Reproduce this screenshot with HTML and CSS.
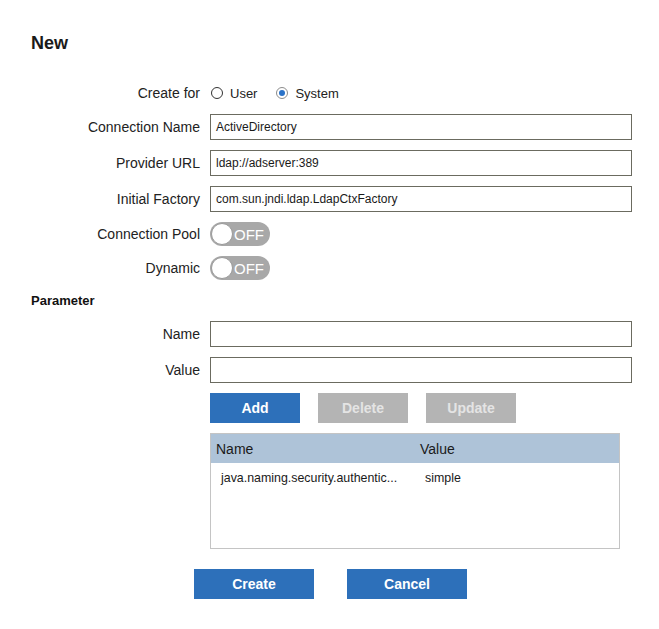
FILE: index.html
```html
<!DOCTYPE html>
<html>
<head>
<meta charset="utf-8">
<link rel="stylesheet" href="styles.css">
</head>
<body>
<div class="page">
  <h1 class="title">New</h1>
  <div class="form">
    <div class="label">Create for</div>
    <div class="radios">
      <span class="radio"></span><span class="radio-text">User</span>
      <span class="radio checked"></span><span class="radio-text">System</span>
    </div>

    <div class="label">Connection Name</div>
    <div class="input">ActiveDirectory</div>

    <div class="label">Provider URL</div>
    <div class="input">ldap://adserver:389</div>

    <div class="label">Initial Factory</div>
    <div class="input">com.sun.jndi.ldap.LdapCtxFactory</div>

    <div class="label">Connection Pool</div>
    <div class="toggle-cell"><span class="toggle"><span class="knob"></span><span class="toggle-text">OFF</span></span></div>

    <div class="label">Dynamic</div>
    <div class="toggle-cell"><span class="toggle"><span class="knob"></span><span class="toggle-text">OFF</span></span></div>

    <div class="section">Parameter</div>

    <div class="label">Name</div>
    <div class="input"></div>

    <div class="label">Value</div>
    <div class="input"></div>

    <div></div>
    <div class="btn-row">
      <button class="btn primary">Add</button>
      <button class="btn disabled">Delete</button>
      <button class="btn disabled">Update</button>
    </div>

    <div></div>
    <div class="table">
      <div class="thead">
        <div>Name</div>
        <div>Value</div>
      </div>
      <div class="trow">
        <div>java.naming.security.authentic...</div>
        <div>simple</div>
      </div>
    </div>
  </div>
  <div class="actions">
    <button class="btn primary wide">Create</button>
    <button class="btn primary wide">Cancel</button>
  </div>
</div>
</body>
</html>
```

FILE: styles.css
```css
html, body {
  margin: 0;
  padding: 0;
  background: #ffffff;
}

body {
  font-family: "Liberation Sans", Arial, sans-serif;
  color: #222222;
}

.page {
  width: 659px;
}

.title {
  margin: 33px 0 0 31px;
  font-size: 18px;
  line-height: 21px;
  font-weight: bold;
  color: #1a1a1a;
}

.form {
  margin-top: 28px;
  display: grid;
  grid-template-columns: 200px 422px;
  grid-template-rows: 22px 26px 26px 26px 24px 24px 21px 26px 26px 30px 116px;
  column-gap: 10px;
  row-gap: 10px;
}

.label {
  font-size: 14px;
  text-align: right;
  display: flex;
  align-items: center;
  justify-content: flex-end;
  color: #222222;
}

.radios {
  display: flex;
  align-items: center;
  font-size: 13px;
  padding-left: 1px;
}

.radio {
  width: 10px;
  height: 10px;
  border: 1px solid #333333;
  border-radius: 50%;
  box-sizing: content-box;
  position: relative;
  margin-right: 7px;
}

.radio.checked {
  border-color: #8c8c8c;
  margin-left: 19px;
}

.radio.checked::after {
  content: "";
  position: absolute;
  left: 2px;
  top: 2px;
  width: 6px;
  height: 6px;
  border-radius: 50%;
  background: #2a72c8;
}

.radio-text {
  color: #222222;
}

.input {
  box-sizing: border-box;
  height: 26px;
  border: 1px solid #6b6b60;
  padding-left: 5px;
  font-size: 12px;
  display: flex;
  align-items: center;
  color: #1a1a1a;
  background: #ffffff;
}

.toggle-cell {
  display: flex;
  align-items: center;
}

.toggle {
  width: 60px;
  height: 24px;
  border-radius: 12px;
  background: #a8a8a8;
  display: flex;
  align-items: center;
  position: relative;
}

.knob {
  width: 20px;
  height: 20px;
  border-radius: 50%;
  background: #ffffff;
  border: 1px solid #9a9a9a;
  margin-left: 1px;
}

.toggle-text {
  color: #ffffff;
  font-size: 15px;
  margin-left: 1px;
}

.section {
  grid-column: 1 / -1;
  padding-left: 31px;
  font-size: 13px;
  font-weight: bold;
  display: flex;
  align-items: center;
  color: #111111;
}

.btn-row {
  display: flex;
  gap: 18px;
}

.btn {
  width: 90px;
  height: 30px;
  border: none;
  margin: 0;
  padding: 0;
  font-family: "Liberation Sans", Arial, sans-serif;
  font-size: 14px;
  font-weight: bold;
  color: #ffffff;
  cursor: pointer;
}

.btn.primary {
  background: #2d70ba;
}

.btn.disabled {
  background: #b4b4b4;
  color: #e4e4e4;
}

.btn.wide {
  width: 120px;
}

.table {
  width: 410px;
  height: 116px;
  box-sizing: border-box;
  border: 1px solid #c4c4c4;
}

.thead {
  display: grid;
  grid-template-columns: 204px 1fr;
  height: 29px;
  align-items: center;
  background: #aec3d8;
  padding-left: 5px;
  font-size: 14px;
  color: #1a1a1a;
}

.trow {
  display: grid;
  grid-template-columns: 204px 1fr;
  height: 30px;
  align-items: center;
  padding-left: 10px;
  font-size: 12.4px;
  color: #1a1a1a;
}

.actions {
  margin-top: 20px;
  margin-left: 2px;
  display: flex;
  justify-content: center;
  gap: 33px;
}
```
